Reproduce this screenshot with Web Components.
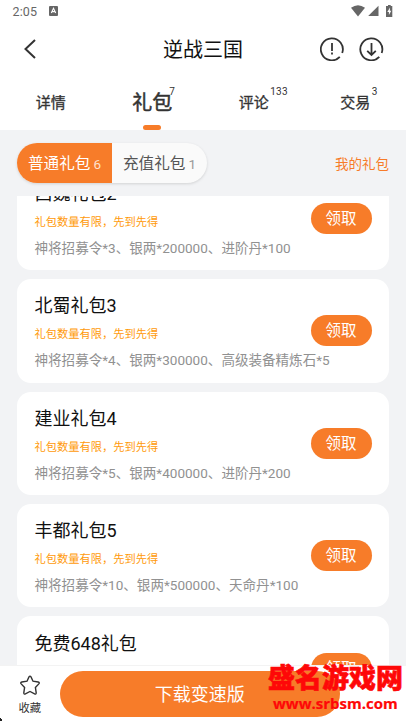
<!DOCTYPE html>
<html lang="zh-CN">
<head>
<meta charset="utf-8">
<title>逆战三国</title>
<style>
html,body{margin:0;height:100%;overflow:hidden}
body{font-family:Roboto,"Noto Sans CJK SC",sans-serif;background:#f2f3f5}
</style>
</head>
<body>
<game-page></game-page>
<script>
const define = (name, html) => customElements.define(name, class extends HTMLElement {
  constructor() {
    super();
    const t = document.createElement('template');
    t.innerHTML = html;
    this.attachShadow({mode: 'open'}).appendChild(t.content.cloneNode(true));
  }
});

define('status-bar', `
<style>
:host{display:flex;align-items:center;height:22px;padding:0 11px 0 12.5px;color:#666}
.time{font-size:12.5px;line-height:22px;letter-spacing:.1px;padding-top:1px}
.a{margin-left:12px}
.icons{margin-left:auto;display:flex;gap:3px;padding-top:0}
svg{display:block}
</style>
<span class="time">2:05</span>
<svg class="a" width="9" height="10" viewBox="0 0 9 10"><rect width="9" height="10" rx="1" fill="#666"/><path d="M2.3 7 4.5 2.2 6.7 7M3.2 5.6h2.6" stroke="#fff" stroke-width="1.1" fill="none"/></svg>
<div class="icons">
<svg width="14" height="12" viewBox="0 0 14 12"><path d="M0 2.7Q7-2.3 14 2.7L7 11.4Z" fill="#666"/></svg>
<svg width="11" height="12" viewBox="0 0 11 12"><path d="M10.5.7V11H.2Z" fill="#666"/></svg>
<svg width="13" height="12" viewBox="0 0 13 12"><path d="M4 1h2V0h2.7v1h1.6v11H4Z" fill="#666"/><path d="M8 2.5 5.3 7h1.6v3L9.3 5.8H7.8Z" fill="#fff"/></svg>
</div>`);

define('nav-bar', `
<style>
:host{display:grid;grid-template-columns:1fr auto 1fr;align-items:center;height:54px;padding:0 22px 0 23px}
h1{margin:0;font-size:20px;font-weight:400;line-height:28px;color:#111;padding:2px 1px 0 0}
.right{display:flex;justify-content:flex-end;gap:15px}
svg{display:block}
</style>
<svg width="14" height="20" viewBox="0 0 14 20"><path d="M12 1 2.5 10 12 19" fill="none" stroke="#333" stroke-width="2"/></svg>
<h1><slot></slot></h1>
<div class="right">
<svg width="24" height="24" viewBox="0 0 24 24" fill="none" stroke="#333" stroke-width="1.8"><path d="M19.8 19.9A11 11 0 1 1 22.2 16M12 6v8M12 15.6v2"/></svg>
<svg width="25" height="24" viewBox="0 0 25 24" fill="none" stroke="#333" stroke-width="1.8"><path d="M20.3 19.9A11 11 0 1 1 22.7 16M12.5 6v12M8.2 13.8l4.3 4.2 4.3-4.2"/></svg>
</div>`);

define('tab-item', `
<style>
:host{display:flex;justify-content:center;height:54px;color:#333}
.label{position:relative;font-size:15px;font-weight:400;line-height:22px;padding-top:15.5px;-webkit-text-stroke:.3px #333}
sup{position:absolute;left:100%;top:8.5px;margin-left:1.5px;font-size:10px;line-height:14px;font-weight:400;-webkit-text-stroke:0;letter-spacing:.2px}
i{display:none}
:host([active]) .label{font-size:20px;-webkit-text-stroke-width:.5px}
:host([active]) sup{margin-left:-3px}
:host([active]) i{display:block;position:absolute;left:50%;bottom:0;width:18px;height:5px;margin-left:-9px;border-radius:3px;background:#f77c29}
</style>
<div class="label"><slot></slot><sup><slot name="count"></slot></sup><i></i></div>`);

define('tab-strip', `
<style>:host{display:grid;grid-template-columns:repeat(4,101.5px);height:54px}</style><slot></slot>`);

define('gift-filter', `
<style>
:host{display:flex;align-items:center;justify-content:space-between;height:66px;padding:0 17px}
.seg{display:flex;height:40px;border-radius:20px;overflow:hidden;background:#fafafa;box-shadow:0 1px 3px #0002;width:190px}
.seg div{width:95px;display:flex;align-items:baseline;justify-content:center;font-size:15.6px;line-height:42px;color:#555;gap:3px}
.seg .on{background:#f77c29;color:#fff}
small{font-size:13.5px;color:#999}
.on small{color:#ffe0cc}
.mine{font-size:13.5px;color:#f77c29;line-height:20px;padding-top:1px}
</style>
<div class="seg"><div class="on"><span>普通礼包</span><small>6</small></div><div><span>充值礼包</span><small>1</small></div></div>
<span class="mine">我的礼包</span>`);

define('gift-card', `
<style>
:host{display:flex;align-items:flex-start;box-sizing:border-box;height:103.4px;flex:none;padding:0 17.5px;border-radius:14px;background:#fff}
.info{flex:1;min-width:0;white-space:nowrap;padding-top:13.2px}
h2{margin:0;font-size:18px;font-weight:400;line-height:28px;color:#111}
.note{font-size:11.25px;line-height:16px;color:#ff9a0a;margin-top:7px}
.desc{font-size:13.56px;line-height:20px;color:#919191;margin-top:7px}
button{flex:none;width:61px;height:31px;margin-top:36.2px;padding:0;border:0;border-radius:15.5px;background:#f77c29;color:#fff;font:15.5px/32px Roboto,"Noto Sans CJK SC",sans-serif}
</style>
<div class="info"><h2><slot></slot></h2><div class="note">礼包数量有限，先到先得</div><div class="desc"><slot name="desc"></slot></div></div>
<button>领取</button>`);

define('gift-list', `
<style>:host{display:flex;flex-direction:column;justify-content:flex-start;gap:9px;padding:0 17px;overflow:hidden;flex:1;min-height:0}
::slotted(:first-child){margin-top:-29.2px}</style><slot></slot>`);

define('bottom-bar', `
<style>
:host{display:flex;height:56px;box-sizing:border-box;background:#fff;border-top:1px solid #f3f3f3}
.fav{width:59.5px;display:flex;flex-direction:column;align-items:center;font-size:11.3px;line-height:16px;color:#333;padding-top:9px;box-sizing:border-box}
svg{display:block;margin-bottom:5px}
.dl{width:280.5px;height:46px;margin-top:5px;border-radius:23px;background:#f77c29;color:#fff;font-size:18px;line-height:48px;text-align:center}
</style>
<div class="fav"><svg width="22" height="21" viewBox="0 0 22 21"><path d="M10 1.9Q11 .3 12 1.9L14 6.2 19.2 7Q21 7.5 19.8 8.9L16.4 12.4 17.2 17.8Q17.2 19.6 15.6 18.9L11 16.5 6.4 18.9Q4.8 19.6 4.8 17.8L5.6 12.4 2.2 8.9Q1 7.5 2.8 7L8 6.2Z" fill="none" stroke="#333" stroke-width="1.4"/></svg>收藏</div>
<div class="dl">下载变速版</div>`);

define('site-mark', `
<style>
:host{position:absolute;left:268px;top:659px;width:138px;color:#fe0808;white-space:nowrap}
.cn{font:900 27px/35px "Noto Sans CJK SC",sans-serif;-webkit-text-stroke:.6px #fe0808}
.url{font:700 15px/18px "Open Sans",sans-serif;padding-left:5px;-webkit-text-stroke:.2px #fe0808}
</style>
<div class="cn">盛名游戏网</div><div class="url">www.srbsm.com</div>`);

define('game-page', `
<style>
:host{display:flex;flex-direction:column;position:relative;width:406px;height:721px;background:#f2f3f5;overflow:hidden}
header{background:#fff;height:130px;flex:none}
gift-filter,bottom-bar{flex:none}
.speck{position:absolute;left:0;top:718px}
</style>
<header>
<status-bar></status-bar>
<nav-bar>逆战三国</nav-bar>
<tab-strip>
<tab-item>详情</tab-item>
<tab-item active>礼包<span slot="count">7</span></tab-item>
<tab-item>评论<span slot="count">133</span></tab-item>
<tab-item>交易<span slot="count">3</span></tab-item>
</tab-strip>
</header>
<gift-filter></gift-filter>
<gift-list>
<gift-card>西魏礼包2<span slot="desc">神将招募令*3、银两*200000、进阶丹*100</span></gift-card>
<gift-card>北蜀礼包3<span slot="desc">神将招募令*4、银两*300000、高级装备精炼石*5</span></gift-card>
<gift-card>建业礼包4<span slot="desc">神将招募令*5、银两*400000、进阶丹*200</span></gift-card>
<gift-card>丰都礼包5<span slot="desc">神将招募令*10、银两*500000、天命丹*100</span></gift-card>
<gift-card>免费648礼包</gift-card>
</gift-list>
<bottom-bar></bottom-bar>
<svg class="speck" width="3" height="3"><path d="M0 0h1v1h1v2H0Z" fill="#222"/></svg>
<site-mark></site-mark>`);
</script>
</body>
</html>
